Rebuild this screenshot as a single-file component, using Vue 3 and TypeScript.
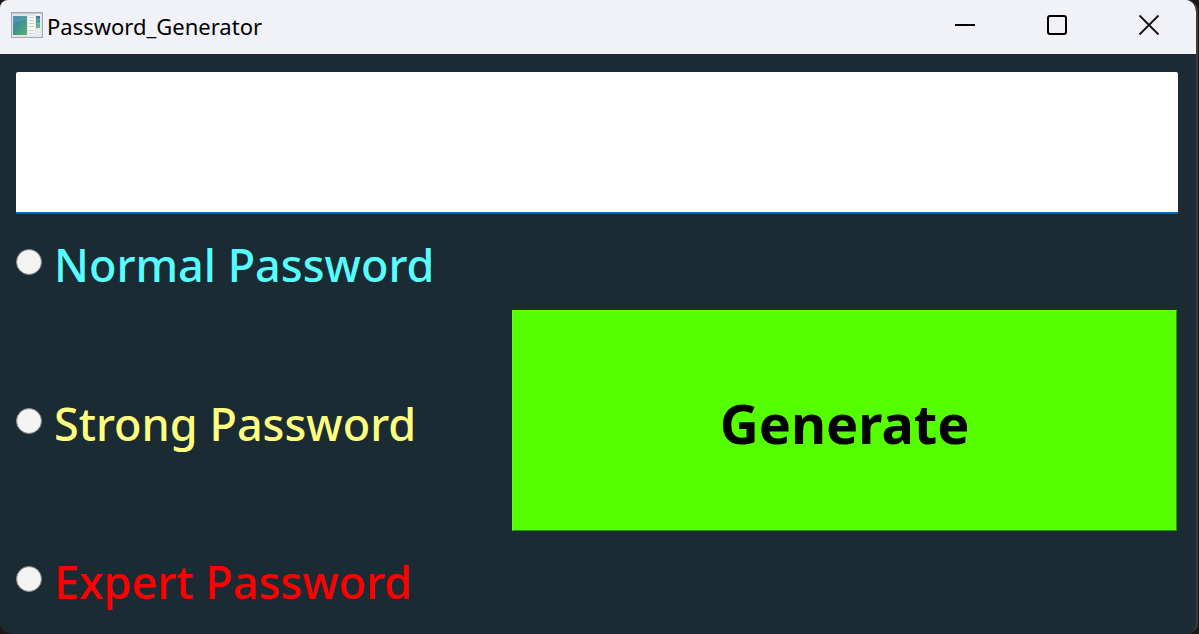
<script setup lang="ts">
import { ref } from 'vue'

type Strength = 'normal' | 'strong' | 'expert'

const options: { id: Strength; label: string }[] = [
  { id: 'normal', label: 'Normal Password' },
  { id: 'strong', label: 'Strong Password' },
  { id: 'expert', label: 'Expert Password' },
]

const lengths: Record<Strength, number> = { normal: 8, strong: 14, expert: 22 }
const letters = 'abcdefghijklmnopqrstuvwxyzABCDEFGHIJKLMNOPQRSTUVWXYZ'
const alphabets: Record<Strength, string> = {
  normal: letters,
  strong: letters + '0123456789',
  expert: letters + '0123456789!@#$%^&*()-_=+?',
}

const strength = ref<Strength | ''>('')
const password = ref('')

function generate(): void {
  if (!strength.value) return
  const chars = alphabets[strength.value]
  const values = crypto.getRandomValues(new Uint32Array(lengths[strength.value]))
  password.value = Array.from(values, (v) => chars[v % chars.length]).join('')
}
</script>

<template>
  <div class="desktop">
    <main class="window">
      <header class="titlebar">
        <svg class="app-icon" width="32" height="26" viewBox="0 0 32 26" aria-hidden="true">
          <defs>
            <linearGradient id="pane" x1="0" y1="0" x2="1" y2="1">
              <stop offset="0" stop-color="#3f7fa6" />
              <stop offset="0.5" stop-color="#3f9490" />
              <stop offset="1" stop-color="#62b56a" />
            </linearGradient>
            <linearGradient id="strip" x1="0" y1="0" x2="0" y2="1">
              <stop offset="0" stop-color="#3c78a8" />
              <stop offset="1" stop-color="#69c07c" />
            </linearGradient>
          </defs>
          <rect x="0.5" y="0.5" width="31" height="25" fill="#e4e6e9" stroke="#a3a8b3" />
          <path d="M1 1.5H31" stroke="#bcc4d2" />
          <path d="M24 2.5H29" stroke="#fff" />
          <rect x="2" y="4" width="14" height="19" fill="url(#pane)" />
          <path d="M2 12C6 9 11 9 16 8V4H2Z" fill="#7fb0cc" opacity="0.3" />
          <rect x="17" y="4" width="7" height="19" fill="#fafafa" />
          <path d="M18 5.5H23M18 8.5H23M18 11.5H23M18 14.5H23M18 18.5H23M18 21.5H23" stroke="#c9cbcd" />
          <rect x="25" y="4" width="4" height="12" fill="url(#strip)" />
          <path d="M25 7.5H29M25 11.5H29" stroke="#fff" opacity="0.25" />
          <path d="M25 18.5H29M25 21.5H29" stroke="#f4f5f6" />
        </svg>
        <h1 class="title">Password_Generator</h1>
        <div class="controls">
          <button type="button" class="control" aria-label="Minimize">
            <svg width="22" height="22" viewBox="0 0 22 22"><path d="M1 11H21" stroke="#000" stroke-width="2" /></svg>
          </button>
          <button type="button" class="control" aria-label="Maximize">
            <svg width="22" height="22" viewBox="0 0 22 22"><rect x="2" y="2" width="18" height="18" rx="2" fill="none" stroke="#000" stroke-width="2" /></svg>
          </button>
          <button type="button" class="control" aria-label="Close">
            <svg width="22" height="22" viewBox="0 0 22 22"><path d="M1.5 1.5L20.5 20.5M20.5 1.5L1.5 20.5" stroke="#111" stroke-width="1.8" /></svg>
          </button>
        </div>
      </header>

      <form class="content" @submit.prevent="generate">
        <input v-model="password" class="output" type="text" aria-label="Generated password" />
        <div class="panel">
          <label v-for="option in options" :key="option.id" class="option" :class="option.id">
            <input v-model="strength" class="radio" type="radio" name="strength" :value="option.id" />
            <span class="label">{{ option.label }}</span>
          </label>
          <button type="submit" class="generate">Generate</button>
        </div>
      </form>
    </main>
  </div>
</template>

<style>
body {
  margin: 0;
  background: #1b1817;
}
</style>

<style scoped>
.desktop {
  box-sizing: border-box;
  display: flex;
  min-height: 100vh;
  background: #1b1817;
  font-family: 'Segoe UI', 'Noto Sans', 'Open Sans', sans-serif;
}

.window {
  box-sizing: border-box;
  display: flex;
  flex: 1;
  flex-direction: column;
  margin-right: 1px;
  border-right: 2px solid #403b39;
  border-radius: 8px 12px 12px 12px;
  overflow: hidden;
  background: #1b2b33;
}

.titlebar {
  display: flex;
  align-items: center;
  height: 54px;
  padding: 0 1px 0 11px;
  background: #f1f2f8;
}

.app-icon {
  margin-bottom: 4px;
}

.title {
  margin: 0 0 0 4px;
  padding-bottom: 2px;
  font-size: 22px;
  font-weight: 400;
  line-height: 32px;
  color: #000;
}

.controls {
  display: flex;
  align-self: stretch;
  margin-left: auto;
}

.control {
  display: flex;
  align-items: center;
  justify-content: center;
  width: 92px;
  padding: 0 0 4px;
  border: 0;
  background: transparent;
}

.content {
  display: flex;
  flex: 1;
  flex-direction: column;
  padding: 18px 18px 8px 16px;
}

.output {
  box-sizing: border-box;
  width: 100%;
  height: 142px;
  padding: 0 12px;
  border: 0;
  border-bottom: 2px solid #0067c0;
  border-radius: 2px 2px 0 0;
  outline: 0;
  background: #fff;
  font: 500 45px 'Segoe UI', 'Noto Sans', 'Open Sans', sans-serif;
  color: #000;
}

.panel {
  display: grid;
  flex: 1;
  grid-template-columns: 47fr 63fr;
  grid-template-rows: 96px 1fr 95px;
  padding-right: 1px;
}

.option {
  display: flex;
  grid-column: 1;
  align-items: center;
  gap: 12px;
  font-size: 45px;
  font-weight: 500;
  line-height: 64px;
  white-space: nowrap;
}

.radio {
  box-sizing: border-box;
  flex: none;
  width: 26px;
  height: 26px;
  margin: 0;
  border: 1px solid #858585;
  border-radius: 50%;
  appearance: none;
  background: #f3f3f3;
}

.radio:checked {
  border: 7px solid #0067c0;
}

.label {
  padding-top: 6px;
}

.normal {
  color: #55ffff;
}

.strong {
  color: #ffff7f;
}

.expert {
  color: #ff0000;
}

.generate {
  grid-row: 2;
  grid-column: 2;
  padding: 4px 0 0;
  border: 1px solid #2f9400;
  border-top-color: #63ff18;
  border-left-color: #63ff18;
  border-radius: 0;
  background: #55ff00;
  font: 700 54px 'Segoe UI', 'Noto Sans', 'Open Sans', sans-serif;
  color: #000;
}
</style>
